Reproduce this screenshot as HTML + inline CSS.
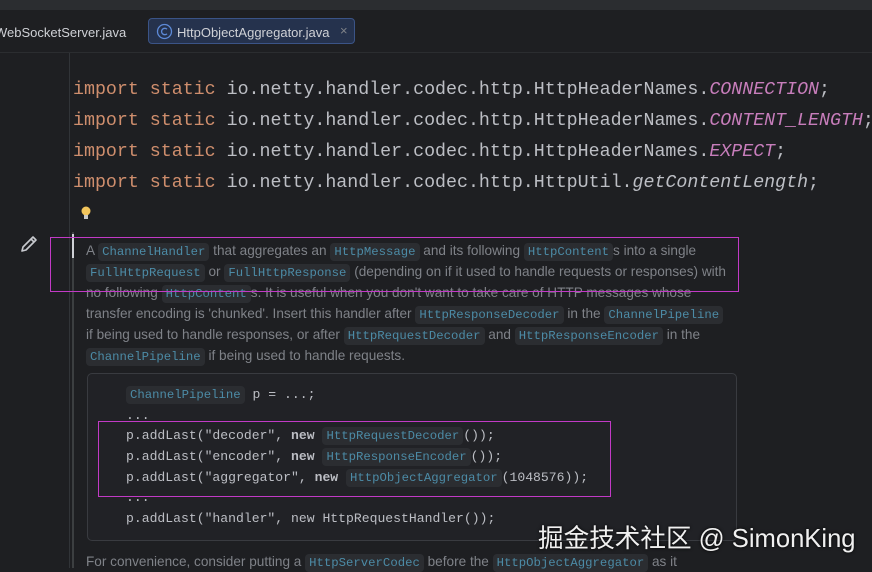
<!DOCTYPE html>
<html><head><meta charset="utf-8"><style>
body{margin:0;width:872px;height:568px;background:#1e1f22;overflow:hidden;position:relative;font-family:"Liberation Sans",sans-serif}
.top{position:absolute;left:0;top:0;width:872px;height:10px;background:#2b2d30}
.tabs{position:absolute;left:0;top:10px;width:872px;height:42px;background:#1e1f22;border-bottom:1px solid #2b2d30}
.tab{position:absolute;top:15px;font-size:13px;color:#cfd1d6}
.act{left:148px;top:8px;width:207px;height:26px;background:#25324d;border:1px solid #3b5487;border-radius:4px;box-sizing:border-box}
.gut{position:absolute;left:69px;top:53px;width:1px;height:515px;background:#313438}
.code{position:absolute;left:73px;font-family:"Liberation Mono",monospace;font-size:18.3px;color:#bcbec4;white-space:pre}
.k{color:#cf8e6d}.p{color:#c77dbb;font-style:italic}.i{font-style:italic}
.doc{position:absolute;left:86px;font-size:13.6px;color:#7f8288;white-space:nowrap}
.c{font-family:"Liberation Mono",monospace;font-size:12.3px;color:#4c8ba6;background:#2b2d31;border-radius:4px;padding:2px 4px}
.bar{position:absolute;left:72px;top:232px;width:2px;height:336px;background:#3c3f41}
.bar2{position:absolute;left:72px;top:234px;width:2px;height:24px;background:#cfd1d6}
.box{position:absolute;left:87px;top:373px;width:650px;height:168px;border:1px solid #393b40;border-radius:5px;background:#212226;box-sizing:border-box}
.bc{position:absolute;left:126px;font-family:"Liberation Mono",monospace;font-size:13.1px;color:#bcbec4;white-space:pre}
.pk{position:absolute;border:1px solid #c23ac6}
</style></head><body>
<div class="top"></div>
<div class="tabs">
<div class="tab" style="left:-5px">WebSocketServer.java</div>
<div class="tab act"></div>
<svg style="position:absolute;left:156px;top:13px" width="17" height="17"><circle cx="8.5" cy="8.5" r="7" fill="none" stroke="#5d8ad8" stroke-width="1.3"/><path d="M11 6.2a3.2 3.2 0 1 0 0 4.6" fill="none" stroke="#5d8ad8" stroke-width="1.3"/></svg>
<div class="tab" style="left:177px">HttpObjectAggregator.java</div>
<div class="tab" style="left:340px;color:#7f8288;top:13px">×</div>
</div>
<div class="gut"></div>
<div class="code" style="top:80px"><span class="k">import static</span> io.netty.handler.codec.http.HttpHeaderNames.<span class="p">CONNECTION</span>;</div>
<div class="code" style="top:111px"><span class="k">import static</span> io.netty.handler.codec.http.HttpHeaderNames.<span class="p">CONTENT_LENGTH</span>;</div>
<div class="code" style="top:142px"><span class="k">import static</span> io.netty.handler.codec.http.HttpHeaderNames.<span class="p">EXPECT</span>;</div>
<div class="code" style="top:173px"><span class="k">import static</span> io.netty.handler.codec.http.HttpUtil.<span class="i">getContentLength</span>;</div>
<svg style="position:absolute;left:80px;top:205px" width="12" height="16"><circle cx="6" cy="6" r="4.5" fill="#f2c55c"/><rect x="4" y="10" width="4" height="4" fill="#c8c8c8"/></svg>
<svg style="position:absolute;left:18px;top:233px" width="22" height="22"><path d="M4 18l1-4L15 4l3 3L8 17z M13 6l3 3" fill="none" stroke="#c8cacf" stroke-width="1.6" stroke-linejoin="round"/></svg>
<div class="bar"></div><div class="bar2"></div>
<div class="doc" style="top:243px">A <span class="c">ChannelHandler</span> that aggregates an <span class="c">HttpMessage</span> and its following <span class="c">HttpContent</span>s into a single</div>
<div class="doc" style="top:264px"><span class="c">FullHttpRequest</span> or <span class="c">FullHttpResponse</span> (depending on if it used to handle requests or responses) with</div>
<div class="doc" style="top:285px">no following <span class="c">HttpContent</span>s. It is useful when you don't want to take care of HTTP messages whose</div>
<div class="doc" style="top:306px">transfer encoding is 'chunked'. Insert this handler after <span class="c">HttpResponseDecoder</span> in the <span class="c">ChannelPipeline</span></div>
<div class="doc" style="top:327px">if being used to handle responses, or after <span class="c">HttpRequestDecoder</span> and <span class="c">HttpResponseEncoder</span> in the</div>
<div class="doc" style="top:348px"><span class="c">ChannelPipeline</span> if being used to handle requests.</div>
<div class="box"></div>
<div class="bc" style="top:387px"><span class="c">ChannelPipeline</span> p = ...;</div>
<div class="bc" style="top:408px">...</div>
<div class="bc" style="top:428px">p.addLast("decoder", <b>new</b> <span class="c">HttpRequestDecoder</span>());</div>
<div class="bc" style="top:449px">p.addLast("encoder", <b>new</b> <span class="c">HttpResponseEncoder</span>());</div>
<div class="bc" style="top:470px">p.addLast("aggregator", <b>new</b> <span class="c">HttpObjectAggregator</span>(1048576));</div>
<div class="bc" style="top:490px">...</div>
<div class="bc" style="top:511px">p.addLast("handler", new HttpRequestHandler());</div>
<div class="doc" style="top:554px">For convenience, consider putting a <span class="c">HttpServerCodec</span> before the <span class="c">HttpObjectAggregator</span> as it</div>
<div class="pk" style="left:50px;top:237px;width:687px;height:53px"></div>
<div class="pk" style="left:98px;top:421px;width:511px;height:74px"></div>
<div style="position:absolute;left:538px;top:518px;font-size:25.6px;color:#f0f0f0;text-shadow:0 0 3px #000;font-family:'Liberation Sans','Noto Sans CJK SC',sans-serif;white-space:nowrap">掘金技术社区 @ SimonKing</div>
</body></html>
